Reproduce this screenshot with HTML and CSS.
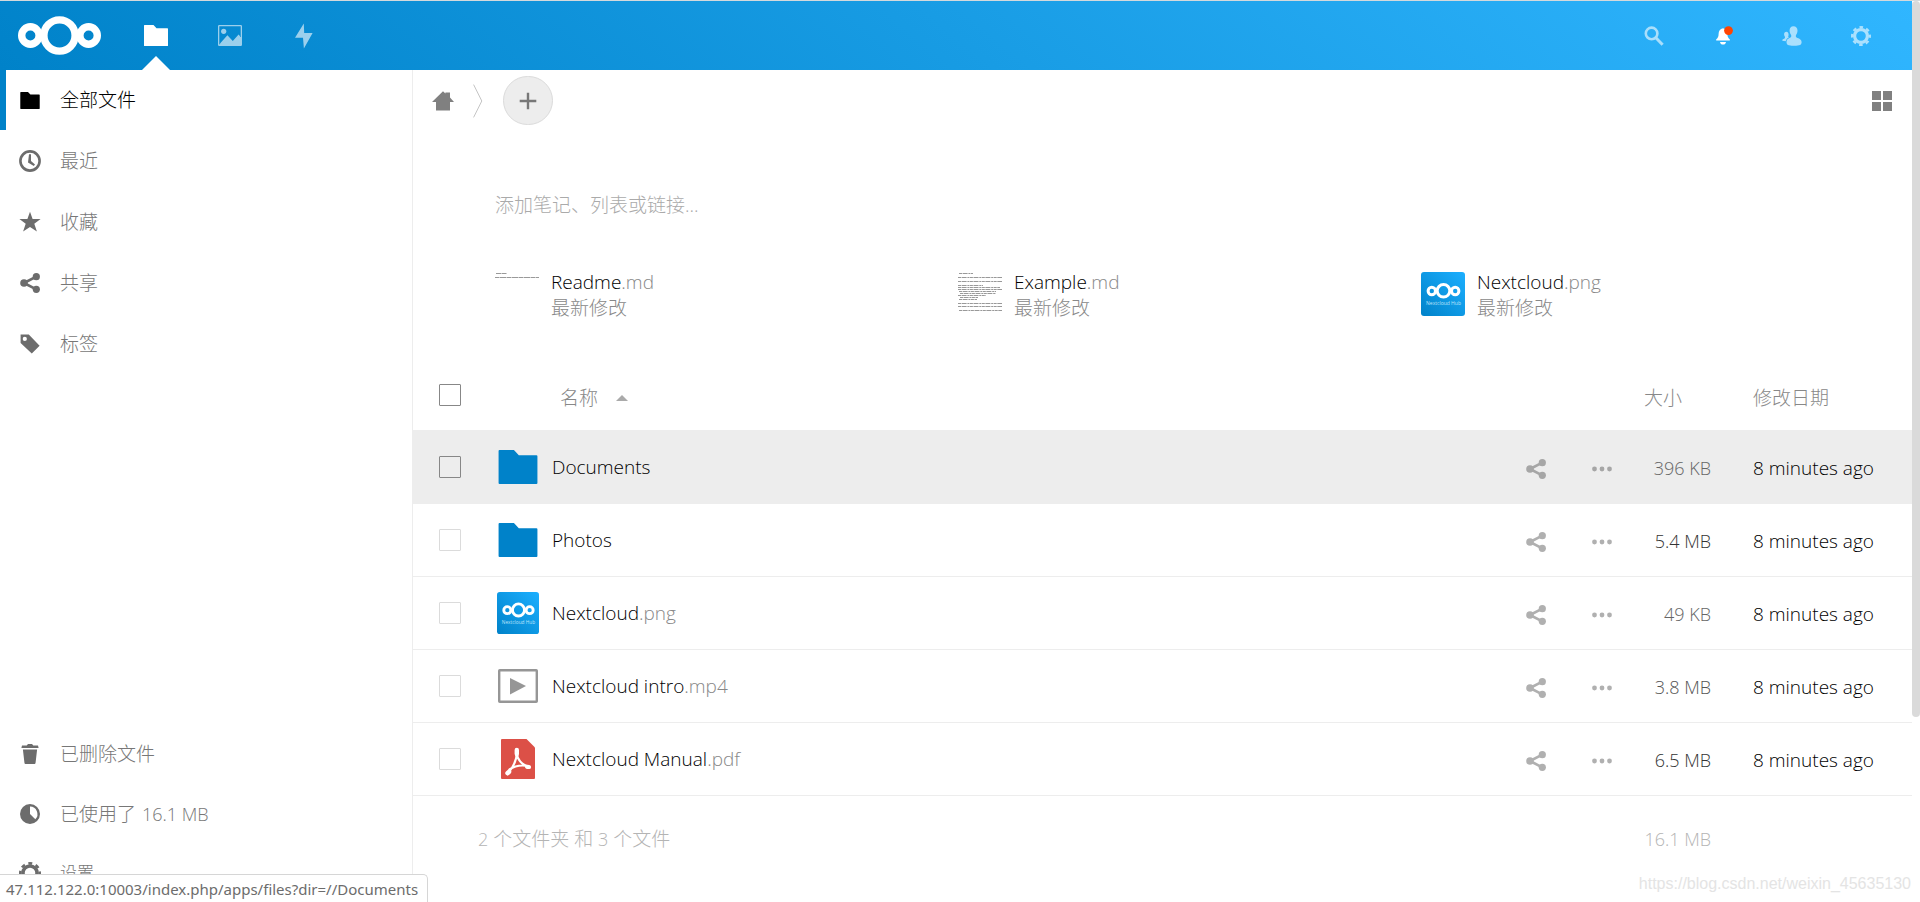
FILE: index.html
```
<!DOCTYPE html>
<html lang="zh-CN">
<head>
<meta charset="utf-8">
<title>文件 - Nextcloud</title>
<link rel="stylesheet" href="styles.css">
</head>
<body>
<svg class="sprite" aria-hidden="true">
  <symbol id="i-folder" viewBox="0 0 24 21"><path d="M0.6 0H9.5L12.5 3.2H23.4a.6.6 0 0 1 .6.6V20.4a.6.6 0 0 1-.6.6H.6a.6.6 0 0 1-.6-.6V.6A.6.6 0 0 1 .6 0z"/></symbol>
  <symbol id="i-share" viewBox="0 0 20 20"><path d="M4 10L16.3 3.7M4 10L16.3 16.3" fill="none" stroke="currentColor" stroke-width="2.6"/><circle cx="4" cy="10" r="3.8"/><circle cx="16.3" cy="3.7" r="3.6"/><circle cx="16.3" cy="16.3" r="3.6"/></symbol>
  <symbol id="i-more" viewBox="0 0 20 20"><circle cx="2.5" cy="10" r="2.4"/><circle cx="10" cy="10" r="2.4"/><circle cx="17.5" cy="10" r="2.4"/></symbol>
  <symbol id="i-gear" viewBox="0 0 20 20"><g fill="none" stroke="currentColor"><circle cx="10" cy="10" r="6.4" stroke-width="3.2"/><circle cx="10" cy="10" r="8.8" stroke-width="2.4" stroke-dasharray="3.6 3.31" stroke-dashoffset="1.8"/></g></symbol>
  <symbol id="i-logo" viewBox="0 0 83 39"><g fill="none" stroke="#fff" stroke-width="7.4"><circle cx="12.4" cy="19.5" r="8.7"/><circle cx="41.5" cy="19.5" r="15.6"/><circle cx="70.6" cy="19.5" r="8.7"/></g></symbol>
  <symbol id="i-png" viewBox="0 0 44 44">
    <defs><linearGradient id="png-bg" x1="0" y1="1" x2="1" y2="0"><stop offset="0" stop-color="#0082c9"/><stop offset="1" stop-color="#1cafff"/></linearGradient></defs>
    <rect width="44" height="44" rx="3" fill="url(#png-bg)"/>
    <g fill="none" stroke="#fff" stroke-width="3"><circle cx="10.8" cy="19" r="3.7"/><circle cx="22.5" cy="18.8" r="6.3"/><circle cx="34.2" cy="19" r="3.7"/></g>
  </symbol>
</svg>

<header class="header">
  <a class="logo" href="#" aria-label="Nextcloud"><svg width="83" height="39"><use href="#i-logo"/></svg></a>
  <nav class="apps" aria-label="应用">
    <a class="app active" href="#" aria-label="文件"><svg width="24" height="21"><use href="#i-folder"/></svg></a>
    <a class="app" href="#" aria-label="照片"><svg width="24" height="21" viewBox="0 0 24 21"><path d="M1.2 0H22.8A1.2 1.2 0 0 1 24 1.2V19.8A1.2 1.2 0 0 1 22.8 21H1.2A1.2 1.2 0 0 1 0 19.8V1.2A1.2 1.2 0 0 1 1.2 0zM1.3 1.3V19.7L2.9 17.6 9.4 10.3 14.8 15.9 20.6 9.5 22.7 12V1.3z" fill-rule="evenodd"/><circle cx="5.7" cy="6.3" r="2.6"/></svg></a>
    <a class="app" href="#" aria-label="动态"><svg width="18" height="26" viewBox="0 0 18 26"><path d="M8.8 0.5L0 14.8H8L8.9 25.5 17.6 10H9.2z"/></svg></a>
  </nav>
  <div class="tools">
    <button class="tool" aria-label="搜索"><svg width="20" height="20" viewBox="0 0 20 20"><circle cx="7.6" cy="7.4" r="5.8" fill="none" stroke="currentColor" stroke-width="2.6"/><path d="M11.6 11.5L18.6 18.8" stroke="currentColor" stroke-width="3"/></svg></button>
    <button class="tool alert" aria-label="通知"><svg width="20" height="20" viewBox="0 0 20 20"><path d="M10 2.2C7 2.6 5.6 5 5.6 8 5.6 11 4.6 12.2 3.2 13.2V14.6H16.8V13.2C15.4 12.2 14.4 11 14.4 8 14.4 5 13 2.6 10 2.2z"/><path d="M7 16H13C12.8 17.6 11.6 18.6 10 18.6S7.2 17.6 7 16z"/><circle cx="15.5" cy="4.6" r="4.4" fill="#ff4402"/></svg></button>
    <button class="tool" aria-label="联系人"><svg width="20" height="20" viewBox="0 0 20 20"><path d="M11.4.3C8.9.3 7.6 2 7.6 4.6 7.6 7 8.5 8.3 9.2 9.2 9.5 10.7 9 11.4 7.5 12 5.6 12.8 4.4 14 4.5 16.2 4.6 18.6 6 19.8 12 19.8S19.6 18.8 19.6 16C19.6 13.6 17.6 12.8 15.5 12 14 11.4 13.6 10.6 13.9 9.2 14.7 8.3 15.5 7 15.5 4.6 15.5 2 14 .3 11.4.3z"/><path d="M4.3 5.8C2.9 5.8 2.1 6.8 2.1 8.3 2.1 9.6 2.6 10.3 3 10.9 3.1 12.1 2.6 12.5 1.4 13 .5 13.4.3 14 .3 14.7L3.7 15.3C4.2 13.3 5.4 12 7 11.3 6 10.8 6.1 10.2 6.6 9.2 6.7 7.2 6 5.8 4.3 5.8z"/></svg></button>
    <button class="tool" aria-label="设置"><svg width="20" height="20"><use href="#i-gear"/></svg></button>
  </div>
</header>

<div class="layout">
  <nav class="sidebar" aria-label="文件导航">
    <div class="nav-main">
      <a class="nav-item current" href="#"><svg width="20" height="17" class="nav-icon"><use href="#i-folder"/></svg>全部文件</a>
      <a class="nav-item" href="#"><svg class="nav-icon" width="22" height="22" viewBox="0 0 22 22"><circle cx="11" cy="11" r="9.6" fill="none" stroke="currentColor" stroke-width="2.6"/><path d="M10 4.2h2V11l4 3.6-1.2 1.5-5.8-3.6z"/></svg>最近</a>
      <a class="nav-item" href="#"><svg class="nav-icon" width="22" height="22" viewBox="0 0 22 22"><path d="M11 .8L13.6 8.1H21.6L15.3 12.7 17.9 20.6 11 16 4.1 20.6 6.7 12.7.4 8.1H8.4z"/></svg>收藏</a>
      <a class="nav-item" href="#"><svg class="nav-icon" width="20" height="20"><use href="#i-share"/></svg>共享</a>
      <a class="nav-item" href="#"><svg class="nav-icon" width="20" height="20" viewBox="0 0 20 20"><path fill-rule="evenodd" d="M.6.6H8.8L19.6 11.8 11.8 19.6.6 9zM4.8 2.8a2.1 2.1 0 1 0 0 4.2 2.1 2.1 0 0 0 0-4.2z"/></svg>标签</a>
    </div>
    <div class="nav-bottom">
      <a class="nav-item" href="#"><svg class="nav-icon" width="18" height="20" viewBox="0 0 18 20"><path d="M7 0H11L12.3 1.4H17L17.6 4H.4L1 1.4H5.7zM1.9 5.4H16.1L14.6 18.4C14.5 19.4 14 20 13 20H5C4 20 3.5 19.4 3.4 18.4z"/></svg>已删除文件</a>
      <a class="nav-item" href="#"><svg class="nav-icon" width="20" height="20" viewBox="0 0 20 20"><path fill-rule="evenodd" d="M10 0a10 10 0 1 0 0 20 10 10 0 0 0 0-20zM10 2.6A7.4 7.4 0 0 1 15.3 15.2L10 10z"/></svg>已使用了 <span class="latin">16.1 MB</span></a>
      <button class="nav-item settings"><svg class="nav-icon" width="22" height="22"><use href="#i-gear"/></svg>设置</button>
    </div>
  </nav>

  <main class="content">
    <div class="controls">
      <a class="home" href="#" aria-label="主目录"><svg width="22" height="20" viewBox="0 0 22 20"><path d="M11 .3L13.4 2.4V1.4H18V6.6L22 11H18V19.4H4V11H0z"/></svg></a>
      <svg class="crumb" width="10" height="34" viewBox="0 0 10 34"><path d="M.6.6L8.8 17 .6 33.4" fill="none" stroke="#c4c4c4"/></svg>
      <button class="add" aria-label="新建"><svg width="18" height="18" viewBox="0 0 18 18"><path d="M9 .7V17.3M.7 9H17.3" stroke="#777" stroke-width="2.4"/></svg></button>
      <button class="view" aria-label="切换网格视图"><svg width="20" height="20" viewBox="0 0 20 20"><path d="M0 0H9V9H0zM11 0H20V9H11zM0 11H9V20H0zM11 11H20V20H11z"/></svg></button>
    </div>

    <input class="note" type="text" aria-label="笔记" placeholder="添加笔记、列表或链接...">

    <section class="recent" aria-label="推荐">
      <a class="recent-item" href="#">
        <svg width="44" height="44" viewBox="0 0 44 44" fill="none" stroke="#999"><path d="M1 1.5H12" stroke-dasharray="5 .5"/><path d="M0 5.5H44" stroke-dasharray="4 .5 7 .5"/></svg>
        <span class="recent-text"><span class="name">Readme<span class="ext">.md</span></span><span class="reason">最新修改</span></span>
      </a>
      <a class="recent-item" href="#">
        <svg width="44" height="44" viewBox="0 0 44 44" fill="none" stroke="#999" stroke-dasharray="3 .6 5 .8 2 .5"><path d="M1 1.5H15M0 5.5H44M0 9.5H44M0 13.5H25M0 15.5H42M0 17.5H44M1 19.5H38M2 21.5H38M0 23.5H28M2 25.5H20M1 27.5H19M0 31.5H44M0 34.5H44M1 38.5H44"/></svg>
        <span class="recent-text"><span class="name">Example<span class="ext">.md</span></span><span class="reason">最新修改</span></span>
      </a>
      <a class="recent-item" href="#">
        <svg width="44" height="44" viewBox="0 0 44 44"><use href="#i-png"/><text x="22.5" y="32.5" text-anchor="middle" class="thumb-label">Nextcloud Hub</text></svg>
        <span class="recent-text"><span class="name">Nextcloud<span class="ext">.png</span></span><span class="reason">最新修改</span></span>
      </a>
    </section>

    <table class="files">
      <colgroup><col class="c-check"><col><col class="c-size"><col class="c-date"></colgroup>
      <thead>
        <tr>
          <th class="check"><input type="checkbox" class="box strong" aria-label="全选"></th>
          <th class="head-name"><button class="sort">名称<svg width="12" height="6" viewBox="0 0 12 6"><path d="M6 0L12 6H0z"/></svg></button></th>
          <th><button class="sort">大小</button></th>
          <th><button class="sort">修改日期</button></th>
        </tr>
      </thead>
      <tbody>
        <tr class="hover">
          <td class="check"><input type="checkbox" class="box strong" aria-label="选择 Documents"></td>
          <td><div class="file"><a class="file-link" href="#"><span class="thumb"><svg class="blue" width="40" height="34"><use href="#i-folder"/></svg></span><span class="name">Documents</span></a><button class="act" aria-label="共享"><svg width="20" height="20"><use href="#i-share"/></svg></button><button class="act" aria-label="更多"><svg width="20" height="20"><use href="#i-more"/></svg></button></div></td>
          <td class="size s1">396 KB</td><td class="date">8 minutes ago</td>
        </tr>
        <tr>
          <td class="check"><input type="checkbox" class="box" aria-label="选择 Photos"></td>
          <td><div class="file"><a class="file-link" href="#"><span class="thumb"><svg class="blue" width="40" height="34"><use href="#i-folder"/></svg></span><span class="name">Photos</span></a><button class="act" aria-label="共享"><svg width="20" height="20"><use href="#i-share"/></svg></button><button class="act" aria-label="更多"><svg width="20" height="20"><use href="#i-more"/></svg></button></div></td>
          <td class="size s3">5.4 MB</td><td class="date">8 minutes ago</td>
        </tr>
        <tr>
          <td class="check"><input type="checkbox" class="box" aria-label="选择 Nextcloud.png"></td>
          <td><div class="file"><a class="file-link" href="#"><span class="thumb"><svg width="42" height="42" viewBox="0 0 44 44"><use href="#i-png"/><text x="22.5" y="34" text-anchor="middle" class="thumb-label">Nextcloud Hub</text></svg></span><span class="name">Nextcloud<span class="ext">.png</span></span></a><button class="act" aria-label="共享"><svg width="20" height="20"><use href="#i-share"/></svg></button><button class="act" aria-label="更多"><svg width="20" height="20"><use href="#i-more"/></svg></button></div></td>
          <td class="size s1">49 KB</td><td class="date">8 minutes ago</td>
        </tr>
        <tr>
          <td class="check"><input type="checkbox" class="box" aria-label="选择 Nextcloud intro.mp4"></td>
          <td><div class="file"><a class="file-link" href="#"><span class="thumb"><svg width="40" height="34" viewBox="0 0 40 34"><rect x="1.2" y="1.2" width="37.6" height="31.6" rx=".6" fill="none" stroke="#969696" stroke-width="2.4"/><path d="M12 9L28 17 12 25.5z" fill="#969696"/></svg></span><span class="name">Nextcloud intro<span class="ext">.mp4</span></span></a><button class="act" aria-label="共享"><svg width="20" height="20"><use href="#i-share"/></svg></button><button class="act" aria-label="更多"><svg width="20" height="20"><use href="#i-more"/></svg></button></div></td>
          <td class="size s2">3.8 MB</td><td class="date">8 minutes ago</td>
        </tr>
        <tr>
          <td class="check"><input type="checkbox" class="box" aria-label="选择 Nextcloud Manual.pdf"></td>
          <td><div class="file"><a class="file-link" href="#"><span class="thumb"><svg width="34" height="40" viewBox="0 0 34 40"><path d="M1 0H25.5L34 8.5V39a1 1 0 0 1-1 1H1a1 1 0 0 1-1-1V1A1 1 0 0 1 1 0z" fill="#dc5047"/><g fill="none" stroke="#fff" stroke-linecap="round"><path d="M15.8 11V15" stroke-width="4.4"/><path d="M6.6 34.2L8 32.8" stroke-width="4.6"/><path d="M26 27.8L28 28" stroke-width="4.2"/><path d="M15.6 13C16 20 20.5 26 28 27.8M15.8 13C16 21 11.5 29 7 34M8.5 30.5C13 27.3 20 25.8 27 27" stroke-width="2.2"/></g></svg></span><span class="name">Nextcloud Manual<span class="ext">.pdf</span></span></a><button class="act" aria-label="共享"><svg width="20" height="20"><use href="#i-share"/></svg></button><button class="act" aria-label="更多"><svg width="20" height="20"><use href="#i-more"/></svg></button></div></td>
          <td class="size s3">6.5 MB</td><td class="date">8 minutes ago</td>
        </tr>
      </tbody>
      <tfoot>
        <tr><td colspan="2" class="summary"><span class="latin">2</span> 个文件夹 和 <span class="latin">3</span> 个文件</td><td class="size">16.1 MB</td><td></td></tr>
      </tfoot>
    </table>
  </main>
</div>

<div class="scroll-thumb"></div>
<div class="status">47.112.122.0:10003/index.php/apps/files?dir=//Documents</div>
<div class="watermark">https://blog.csdn.net/weixin_45635130</div>
</body>
</html>
```
FILE: styles.css
```
* { box-sizing: border-box; }

body {
  margin: 0;
  min-height: 100vh;
  padding-right: 8px;
  border-top: 1px solid #d4d9dc;
  display: flex;
  flex-direction: column;
  position: relative;
  overflow: hidden;
  background: #fff;
  color: #222;
  font: 300 19px/26px "Open Sans", "Noto Sans CJK SC", sans-serif;
}

a { color: inherit; text-decoration: none; }
button, input { font: inherit; color: inherit; }
button { background: none; border: 0; padding: 0; }
svg { display: block; fill: currentColor; flex: none; }
.sprite { position: absolute; width: 0; height: 0; }
.latin { font-size: 18px; }
.thumb-label { font: 5px "Open Sans", sans-serif; fill: #bfe4fa; }

/* top bar */
.header {
  height: 69px;
  padding: 0 17px 0 18px;
  display: flex;
  align-items: stretch;
  color: #fff;
  background: linear-gradient(40deg, #0082c9 0%, #30b6ff 100%);
}
.logo { display: flex; align-items: center; }
.apps { display: flex; margin-left: 18px; }
.app {
  width: 74px;
  display: flex;
  align-items: center;
  justify-content: center;
  position: relative;
}
.app svg { opacity: .6; }
.app.active svg { opacity: 1; }
.app.active::after {
  content: "";
  position: absolute;
  bottom: 0;
  border: 14px solid transparent;
  border-top: 0;
  border-bottom-color: #fff;
}
.tools { display: flex; margin-left: auto; }
.tool {
  width: 69px;
  display: flex;
  align-items: center;
  justify-content: center;
}
.tool svg { opacity: .6; }
.tool.alert svg { opacity: 1; }

.layout { flex: 1; display: flex; }

/* left navigation */
.sidebar {
  width: 413px;
  flex: none;
  border-right: 1px solid #ededed;
  display: flex;
  flex-direction: column;
  justify-content: space-between;
  color: #777;
}
.nav-main { display: grid; gap: 1px; }
.nav-item {
  width: 100%;
  height: 60px;
  display: grid;
  grid-template-columns: 60px auto auto;
  justify-content: start;
  align-items: center;
}
.nav-item .latin { margin-left: 6px; }
.nav-icon { justify-self: center; color: #6c6c6c; }
.current { color: #000; box-shadow: inset 6px 0 #0082c9; }
.settings { height: 58px; font-size: 17px; text-align: left; }
.current .nav-icon { color: #000; }

/* breadcrumb bar */
.content { flex: 1; min-width: 0; }
.controls {
  display: flex;
  align-items: center;
  padding: 6px 20px 0 19px;
  color: #808080;
}
.crumb { margin: 0 20px 0 19px; }
.add {
  width: 50px;
  height: 49px;
  border: 1px solid #dbdbdb;
  border-radius: 25px;
  background: #ededed;
  display: flex;
  align-items: center;
  justify-content: center;
}
.view { margin-left: auto; }

.note {
  display: block;
  width: calc(100% - 110px);
  margin: 62px 28px 0 82px;
  padding: 0;
  height: 36px;
  border: 0;
  outline: 0;
  background: none;
}
.note::placeholder { color: #aaa; opacity: 1; }

.recent {
  display: grid;
  grid-template-columns: repeat(3, 1fr);
  margin: 49px 28px 0 82px;
}
.recent-item { display: flex; gap: 12px; color: #555; }
.recent-text { display: flex; flex-direction: column; margin-top: -3px; }
.name { color: #000; }
.ext { color: #888; }
.reason { color: #888; }

/* file table */
.files {
  width: 100%;
  margin-top: 43px;
  border-collapse: collapse;
  table-layout: fixed;
}
.c-check { width: 82px; }
.c-size { width: 109px; }
.c-date { width: 159px; }
th, td { padding: 0; font-weight: 300; text-align: left; }
thead tr { height: 66px; border-bottom: 1px solid #ededed; }
tbody tr { height: 73px; border-bottom: 1px solid #ededed; }
.hover { background: #ededed; }
.check { padding-left: 26px; }
.box {
  appearance: none;
  display: block;
  width: 22px;
  height: 22px;
  margin: 0;
  border: 1px solid #dbdbdb;
  border-radius: 1px;
}
.box.strong { border-color: #878787; }
thead th { padding-top: 2px; }
thead .check { padding: 0 0 4px 26px; }
.head-name { padding-left: 65px; }
.sort {
  display: flex;
  align-items: center;
  gap: 18px;
  color: #888;
}
.sort svg { color: #aaa; }
.file { display: flex; align-items: center; padding-right: 19px; }
.file-link { flex: 1; display: flex; align-items: center; gap: 13px; }
.thumb { width: 44px; padding-left: 2px; display: flex; justify-content: center; }
.blue { color: #0082c9; }
.act { width: 20px; margin: 4px 13px 0 33px; color: #b0b0b0; }
.hover .act { color: #a6a6a6; }
.size { text-align: right; padding-right: 42px; font-size: 18px; }
tbody .size, .date { padding-top: 3px; }
.date { color: #000; }
.s1 { color: #666; }
.s2 { color: #555; }
.s3 { color: #333; }
tfoot td { height: 88px; color: #b4b4b4; }
tfoot .summary { padding-left: 65px; }

/* overlays */
.scroll-thumb {
  position: absolute;
  top: 0;
  right: 0;
  bottom: 185px;
  width: 8px;
  border-radius: 4px;
  background: #dadada;
}
.status {
  position: absolute;
  left: 0;
  bottom: 0;
  padding: 2px 9px 0 6px;
  border: 1px solid #d6d6d6;
  border-width: 1px 1px 0 0;
  border-radius: 0 5px 0 0;
  background: #fff;
  color: #6c6c6c;
  font: 400 15px/25px "Noto Sans", sans-serif;
}
.watermark {
  position: absolute;
  right: 9px;
  bottom: 6px;
  color: #e4e4e4;
  font: 16px/24px "Liberation Sans", Arial, sans-serif;
}
```
